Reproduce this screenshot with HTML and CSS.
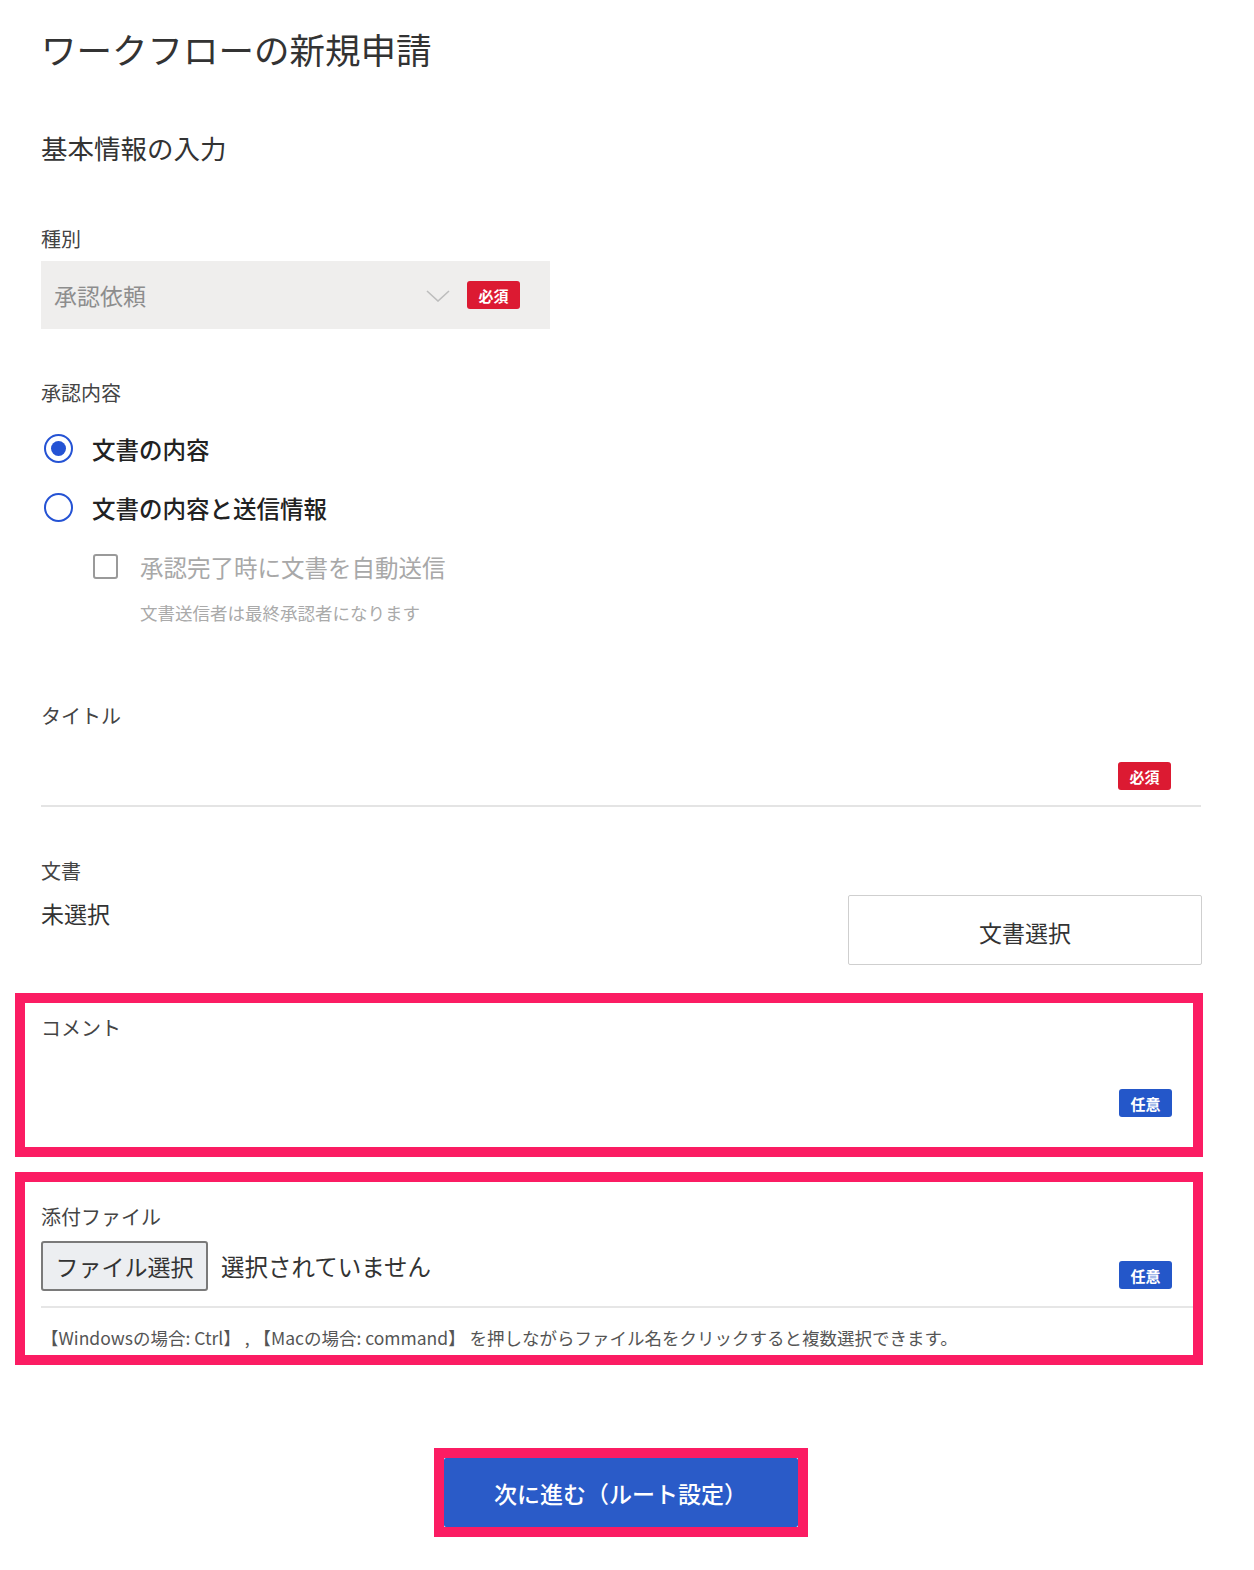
FILE: index.html
```html
<!DOCTYPE html>
<html lang="ja">
<head>
<meta charset="utf-8">
<title>ワークフローの新規申請</title>
<link rel="stylesheet" href="styles.css">
</head>
<body>
<main class="page">
  <h1 class="page-title">ワークフローの新規申請</h1>
  <h2 class="section-title">基本情報の入力</h2>

  <div class="label label-type">種別</div>
  <div class="select">
    <span class="select-value">承認依頼</span>
    <svg class="chevron" width="24" height="12" viewBox="0 0 24 12"><path d="M1 1 L12 11 L23 1" fill="none" stroke="#bdbdbd" stroke-width="1.6"/></svg>
    <span class="badge badge-req">必須</span>
  </div>

  <div class="label label-approve">承認内容</div>
  <div class="radio-row">
    <span class="radio checked"></span>
    <span class="radio-text">文書の内容</span>
  </div>
  <div class="radio-row">
    <span class="radio"></span>
    <span class="radio-text">文書の内容と送信情報</span>
  </div>
  <div class="check-row">
    <span class="checkbox"></span>
    <span class="check-text">承認完了時に文書を自動送信</span>
  </div>
  <div class="note">文書送信者は最終承認者になります</div>

  <div class="label label-title">タイトル</div>
  <div class="text-input">
    <span class="badge badge-req">必須</span>
  </div>

  <div class="label label-doc">文書</div>
  <div class="doc-row">
    <span class="doc-value">未選択</span>
    <button class="doc-button">文書選択</button>
  </div>

  <section class="highlight comment-box">
    <div class="label label-comment">コメント</div>
    <div class="comment-area">
      <span class="badge badge-opt">任意</span>
    </div>
  </section>

  <section class="highlight attach-box">
    <div class="label label-attach">添付ファイル</div>
    <div class="file-row">
      <span class="file-button">ファイル選択</span>
      <span class="file-status">選択されていません</span>
      <span class="badge badge-opt file-badge">任意</span>
    </div>
    <p class="help">【Windowsの場合: Ctrl】 , 【Macの場合: command】 を押しながらファイル名をクリックすると複数選択できます。</p>
  </section>

  <div class="next-wrap">
    <div class="next-frame">
      <button class="next-button">次に進む（ルート設定）</button>
    </div>
  </div>
</main>
</body>
</html>
```

FILE: styles.css
```css
* { box-sizing: border-box; }
html, body { margin: 0; padding: 0; background: #fff; }
body {
  font-family: "Noto Sans CJK JP", "Noto Sans", sans-serif;
  color: #333;
}
.page {
  width: 1254px;
  padding: 29px 53px 40px 41px;
}
.page > * { width: 1160px; }

.page-title {
  margin: 0;
  font-size: 35.5px;
  line-height: 40px;
  font-weight: 400;
  color: #333;
}
.section-title {
  margin: 61px 0 0;
  font-size: 26.5px;
  line-height: 36px;
  font-weight: 400;
  color: #333;
}
.label {
  font-size: 20px;
  line-height: 28px;
  color: #444;
}
.label-type { margin-top: 59px; }
.label-approve { margin-top: 50px; }
.label-title { margin-top: 77px; }
.label-doc { margin-top: 50px; }

.select {
  margin-top: 8px;
  width: 509px !important;
  height: 68px;
  background: #efeeed;
  display: flex;
  align-items: center;
  padding: 0 30px 0 13px;
}
.select-value {
  flex: 1;
  font-size: 23px;
  color: #8d8d8d;
}
.chevron { margin-right: 17px; margin-top: 2px; }

.badge {
  display: inline-flex;
  align-items: center;
  justify-content: center;
  width: 53px;
  height: 28px;
  border-radius: 3px;
  color: #fff;
  font-size: 15px;
  font-weight: 700;
  flex: none;
}
.badge-req { background: #dc1a32; }
.badge-opt { background: #2457c9; }

.radio-row, .check-row {
  display: flex;
  align-items: center;
  height: 59px;
}
.label-approve + .radio-row { margin-top: 12px; }
.radio {
  width: 29px;
  height: 29px;
  border: 2.5px solid #2553d4;
  border-radius: 50%;
  margin-left: 3px;
  display: flex;
  align-items: center;
  justify-content: center;
  flex: none;
}
.radio.checked::after {
  content: "";
  width: 15px;
  height: 15px;
  border-radius: 50%;
  background: #2553d4;
}
.radio-text {
  margin-left: 19px;
  font-size: 23.5px;
  font-weight: 500;
  color: #222;
}
.check-row { padding-left: 52px; }
.checkbox {
  width: 25px;
  height: 25px;
  border: 2.5px solid #9a9a9a;
  border-radius: 3px;
  flex: none;
}
.check-text {
  margin-left: 22px;
  font-size: 23.5px;
  color: #a8a8a8;
}
.note {
  margin-top: 5px;
  padding-left: 99px;
  font-size: 17.5px;
  line-height: 24px;
  color: #aaa;
}

.text-input {
  height: 77px;
  border-bottom: 2px solid #e4e4e4;
  display: flex;
  justify-content: flex-end;
  align-items: flex-end;
  padding: 0 30px 15px 0;
}

.doc-row {
  margin-top: 10px;
  display: flex;
  justify-content: space-between;
  align-items: flex-start;
}
.doc-value {
  margin-top: 4px;
  font-size: 23px;
  line-height: 28px;
  color: #333;
}
.doc-button {
  width: 354px;
  height: 70px;
  background: #fff;
  border: 1.5px solid #cfcfcf;
  border-radius: 2px;
  font-family: inherit;
  font-size: 23px;
  color: #333;
  padding-top: 5px;
  margin-right: -1px;
}

.highlight {
  width: 1188px !important;
  margin-left: -26px;
  border: 10px solid #fb1c63;
  padding: 0 0 0 16px;
}
.comment-box {
  margin-top: 28px;
  padding-top: 11px;
  padding-bottom: 30px;
}
.comment-area {
  display: flex;
  justify-content: flex-end;
  padding: 47px 21px 0 0;
}
.attach-box {
  margin-top: 15px;
  padding-top: 21px;
  padding-bottom: 5px;
}
.file-row {
  margin-top: 10px;
  display: flex;
  align-items: center;
  padding-bottom: 15px;
  border-bottom: 2px solid #e6e6e6;
}
.file-button {
  width: 167px;
  height: 50px;
  background: #eceef1;
  border: 2px solid #7a7a7a;
  border-radius: 3px;
  display: flex;
  align-items: center;
  justify-content: center;
  font-size: 23px;
  color: #333;
}
.file-status {
  margin-left: 13px;
  flex: 1;
  font-size: 23.5px;
  color: #333;
}
.file-badge {
  align-self: flex-end;
  margin: 0 21px 2px 0;
}
.help {
  margin: 18px 0 0;
  font-size: 17.5px;
  line-height: 24px;
  color: #555;
  white-space: nowrap;
}

.next-wrap {
  margin-top: 83px;
  display: flex;
  justify-content: center;
}
.next-frame {
  border: 10px solid #fb1c63;
  margin-left: -1px;
}
.next-button {
  display: block;
  width: 354px;
  height: 69px;
  background: #2a5bc8;
  border: none;
  border-radius: 2px;
  color: #fff;
  font-family: inherit;
  font-size: 23px;
  font-weight: 500;
}
```
